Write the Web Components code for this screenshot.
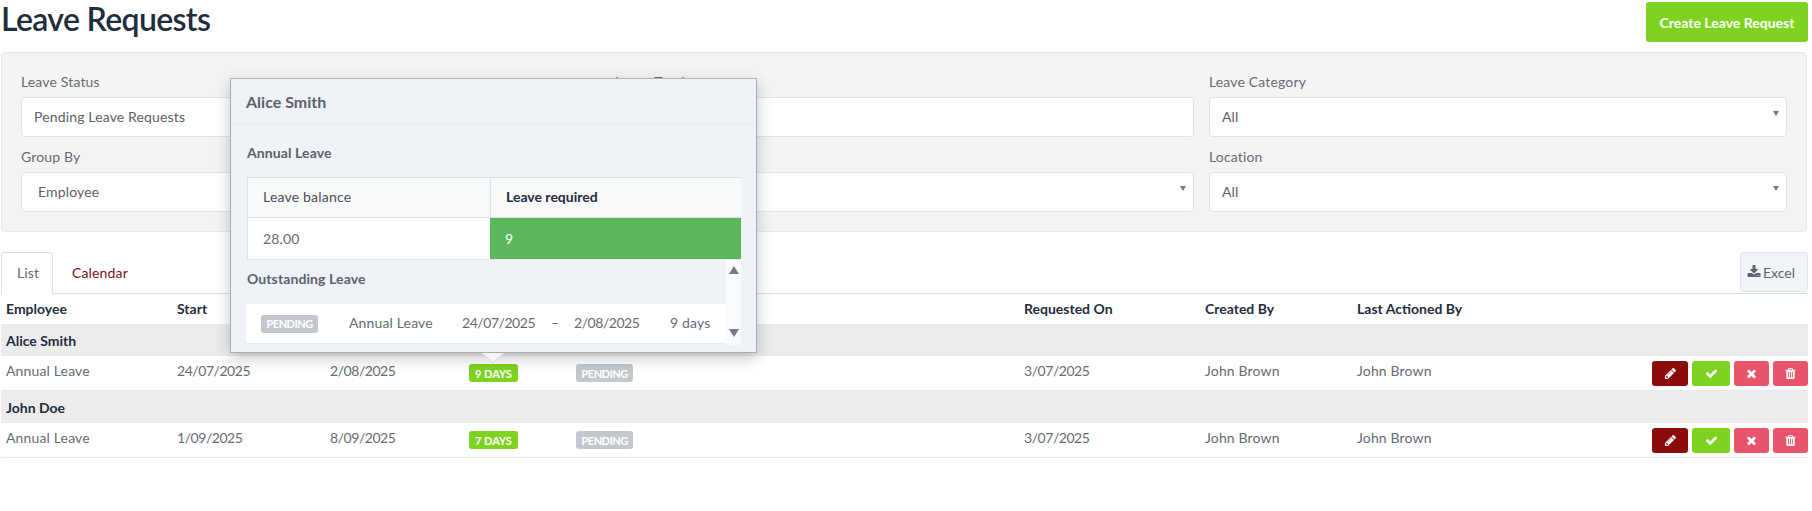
<!DOCTYPE html>
<html>
<head>
<meta charset="utf-8">
<title>Leave Requests</title>
<style>
    html, body { margin: 0; padding: 0; background: #fff; }
    body { font-family: Lato, "Open Sans", sans-serif; font-size: 14px; color: #676b75; letter-spacing: .15px; }
</style>
</head>
<body>
<leave-page>
    <page-header title="Leave Requests" action="Create Leave Request"></page-header>
    <filter-panel>
        <filter-field label="Leave Status" value="Pending Leave Requests"></filter-field>
        <filter-field label="Leave Total" wide></filter-field>
        <filter-field label="Leave Category" value="All" arrow></filter-field>
        <filter-field label="Group By" value="Employee" indent></filter-field>
        <filter-field arrow wide></filter-field>
        <filter-field label="Location" value="All" arrow></filter-field>
    </filter-panel>
    <tab-bar></tab-bar>
    <leave-head></leave-head>
    <leave-group>Alice Smith</leave-group>
    <leave-row type="Annual Leave" start="24/07/2025" end="2/08/2025" days="9 days" requested="3/07/2025" created="John Brown" actioned="John Brown"></leave-row>
    <leave-group>John Doe</leave-group>
    <leave-row type="Annual Leave" start="1/09/2025" end="8/09/2025" days="7 days" requested="3/07/2025" created="John Brown" actioned="John Brown"></leave-row>
    <leave-popover></leave-popover>
</leave-page>

<script>
    // font awesome 4 glyphs, 1792 grid
    const ICONS = {
        pencil: 'M491 1536l91-91-235-235-91 91v107h128v128h107zm523-928q0-22-22-22-10 0-17 7l-542 542q-7 7-7 17 0 22 22 22 10 0 17-7l542-542q7-7 7-17zm-54-192l416 416-832 832h-416v-416zm683 96q0 53-37 90l-166 166-416-416 166-165q36-38 90-38 53 0 91 38l235 234q37 39 37 91z',
        check: 'M1671 566q0 40-28 68l-724 724-136 136q-28 28-68 28t-68-28l-136-136-362-362q-28-28-28-68t28-68l136-136q28-28 68-28t68 28l294 295 656-657q28-28 68-28t68 28l136 136q28 28 28 68z',
        times: 'M1490 1322q0 40-28 68l-136 136q-28 28-68 28t-68-28l-294-294-294 294q-28 28-68 28t-68-28l-136-136q-28-28-28-68t28-68l294-294-294-294q-28-28-28-68t28-68l136-136q28-28 68-28t68 28l294 294 294-294q28-28 68-28t68 28l136 136q28 28 28 68t-28 68l-294 294 294 294q28 28 28 68z',
        trash: 'M704 1376v-704q0-14-9-23t-23-9h-64q-14 0-23 9t-9 23v704q0 14 9 23t23 9h64q14 0 23-9t9-23zm256 0v-704q0-14-9-23t-23-9h-64q-14 0-23 9t-9 23v704q0 14 9 23t23 9h64q14 0 23-9t9-23zm256 0v-704q0-14-9-23t-23-9h-64q-14 0-23 9t-9 23v704q0 14 9 23t23 9h64q14 0 23-9t9-23zm-544-992h448l-48-117q-7-9-17-11h-317q-10 2-17 11zm928 32v64q0 14-9 23t-23 9h-96v948q0 83-47 143.500t-113 60.500h-832q-66 0-113-58.500t-47-141.500v-952h-96q-14 0-23-9t-9-23v-64q0-14 9-23t23-9h309l70-167q15-37 54-63t79-26h320q40 0 79 26t54 63l70 167h309q14 0 23 9t9 23z',
        download: 'M1344 1344q0-26-19-45t-45-19-45 19-19 45 19 45 45 19 45-19 19-45zm256 0q0-26-19-45t-45-19-45 19-19 45 19 45 45 19 45-19 19-45zm128-224v320q0 40-28 68t-68 28h-1472q-40 0-68-28t-28-68v-320q0-40 28-68t68-28h465l135 136q58 56 136 56t136-56l136-136h464q40 0 68 28t28 68zm-325-569q17 41-14 70l-448 448q-18 19-45 19t-45-19l-448-448q-31-29-14-70 17-39 59-39h256v-448q0-26 19-45t45-19h256q26 0 45 19t19 45v448h256q42 0 59 39z'
    };
    const icon = (name, size) => `<svg width="${size}" height="${size}" viewBox="0 0 1792 1792" fill="currentColor"><path d="${ICONS[name]}"/></svg>`;

    const COLUMNS = '171px 153px 139px 107px 448px 181px 152px 1fr';

    class LeavePage extends HTMLElement {
        constructor() {
            super();
            this.attachShadow({ mode: 'open' }).innerHTML = `
                <style>
                    :host { display: block; position: relative; width: 1807px; margin-left: 1px; }
                </style>
                <slot></slot>
            `;
        }
    }

    class PageHeader extends HTMLElement {
        connectedCallback() {
            this.attachShadow({ mode: 'open' }).innerHTML = `
                <style>
                    :host { display: flex; justify-content: space-between; height: 52px; }
                    h1 { margin: 0; font-size: 32px; line-height: 38px; font-weight: 600; color: #1f2d3d; letter-spacing: -0.65px; }
                    button {
                        width: 162px; height: 40px; margin-top: 2px; padding: 0; border: 0; border-radius: 3px;
                        background: #7ed321; color: #fff; font: 700 14px Lato, sans-serif; cursor: pointer;
                    }
                </style>
                <h1>${this.getAttribute('title')}</h1>
                <button>${this.getAttribute('action')}</button>
            `;
        }
    }

    class FilterPanel extends HTMLElement {
        constructor() {
            super();
            this.attachShadow({ mode: 'open' }).innerHTML = `
                <style>
                    :host {
                        display: grid; grid-template-columns: repeat(3, 578px); column-gap: 16px; row-gap: 10px;
                        padding: 19px; box-sizing: border-box; width: 1806px;
                        background: #f4f4f4; border: 1px solid #e8e8e8; border-radius: 4px;
                    }
                </style>
                <slot></slot>
            `;
        }
    }

    class FilterField extends HTMLElement {
        connectedCallback() {
            const label = this.getAttribute('label') || '&nbsp;';
            const value = this.getAttribute('value') || '';
            const pad = this.hasAttribute('indent') ? 16 : 12;
            this.attachShadow({ mode: 'open' }).innerHTML = `
                <style>
                    :host { display: block; }
                    :host([wide]) { margin-right: -1px; }
                    label { display: block; height: 25px; line-height: 19px; font-size: 14px; color: #676b75; }
                    .box {
                        position: relative; display: flex; align-items: center; height: 40px; box-sizing: border-box;
                        padding-left: ${pad}px; padding-bottom: 2px; background: #fff; border: 1px solid #dfe3e8; border-radius: 4px;
                        font-size: 14px; color: #5e6068;
                    }
                    .arrow {
                        position: absolute; right: 7px; top: 13px; width: 0; height: 0;
                        border-left: 3px solid transparent; border-right: 3px solid transparent; border-top: 5px solid #7d7589;
                    }
                </style>
                <label>${label}</label>
                <div class="box">${value}${this.hasAttribute('arrow') ? '<span class="arrow"></span>' : ''}</div>
            `;
        }
    }

    class TabBar extends HTMLElement {
        constructor() {
            super();
            this.attachShadow({ mode: 'open' }).innerHTML = `
                <style>
                    :host {
                        display: flex; align-items: flex-start; height: 42px; box-sizing: border-box; margin-top: 20px;
                        border-bottom: 1px solid #dcdfe3;
                    }
                    .tab {
                        height: 42px; box-sizing: border-box; padding: 0 15px; line-height: 39px; font-size: 14px;
                        border: 1px solid transparent; border-bottom: 0; border-radius: 4px 4px 0 0;
                    }
                    .active { width: 52px; border-color: #dcdfe3; background: #fff; color: #666; }
                    .link { margin-left: 3px; color: #7b1113; }
                    button {
                        display: flex; align-items: center; gap: 2px; margin-left: auto; width: 68px; height: 40px; padding: 0 0 0 6px;
                        background: #f1f4f8; border: 1px solid #e1e5ea; border-radius: 4px; color: #5f6570;
                        font: 14px Lato, sans-serif;
                    }
                </style>
                <div class="tab active">List</div>
                <div class="tab link">Calendar</div>
                <button>${icon('download', 14)}Excel</button>
            `;
        }
    }

    class LeaveHead extends HTMLElement {
        constructor() {
            super();
            const titles = ['Employee', 'Start', 'End', 'Duration', 'Status', 'Requested On', 'Created By', 'Last Actioned By'];
            this.attachShadow({ mode: 'open' }).innerHTML = `
                <style>
                    :host { display: grid; grid-template-columns: ${COLUMNS}; height: 30px; align-items: center; padding-left: 5px; }
                    div { margin-bottom: 2px; font-weight: 700; color: #1f2d3d; font-size: 14px; letter-spacing: 0; }
                </style>
                ${titles.map(t => `<div>${t}</div>`).join('')}
            `;
        }
    }

    class LeaveGroup extends HTMLElement {
        constructor() {
            super();
            this.attachShadow({ mode: 'open' }).innerHTML = `
                <style>
                    :host {
                        display: flex; align-items: center; height: 32px; padding-left: 5px; background: #ececec;
                        font-weight: 700; font-size: 14px; color: #1f2d3d; letter-spacing: 0;
                    }
                </style>
                <slot></slot>
            `;
        }
    }

    class StatusBadge extends HTMLElement {
        constructor() {
            super();
            this.attachShadow({ mode: 'open' }).innerHTML = `
                <style>
                    :host {
                        display: inline-flex; align-items: center; justify-content: center; height: 18px; padding: 0 5.5px;
                        border-radius: 3px; background: #c3c8cf; color: #fff; letter-spacing: -0.5px;
                        font: 700 11px Lato, sans-serif; text-transform: uppercase;
                    }
                    :host([tone="green"]) { background: #7ed321; padding: 0 6px; letter-spacing: 0; }
                </style>
                <slot></slot>
            `;
        }
    }

    class RowActions extends HTMLElement {
        constructor() {
            super();
            this.attachShadow({ mode: 'open' }).innerHTML = `
                <style>
                    :host { display: flex; justify-content: flex-end; gap: 4px; }
                    button {
                        display: flex; align-items: center; justify-content: center; height: 25px; padding: 0; border: 0;
                        border-radius: 3px; color: #fff;
                    }
                    .edit { width: 36px; background: #8b0a0a; }
                    .ok { width: 38px; background: #7ed321; }
                    .no, .del { width: 35px; background: #e8556a; }
                </style>
                <button class="edit">${icon('pencil', 13)}</button>
                <button class="ok">${icon('check', 13)}</button>
                <button class="no">${icon('times', 13)}</button>
                <button class="del">${icon('trash', 13)}</button>
            `;
        }
    }

    class LeaveRow extends HTMLElement {
        connectedCallback() {
            const a = n => this.getAttribute(n);
            this.attachShadow({ mode: 'open' }).innerHTML = `
                <style>
                    :host {
                        display: grid; grid-template-columns: ${COLUMNS}; align-items: center; height: 35px; box-sizing: border-box;
                        padding-left: 5px; border-bottom: 1px solid #e6eaf0; font-size: 14px; color: #676b75;
                    }
                    .t { margin-bottom: 6px; }
                    .d { margin-bottom: 6px; letter-spacing: -0.45px; }
                    .last { display: flex; justify-content: space-between; align-items: center; }
                    .slot-badge { display: flex; }
                </style>
                <div class="t">${a('type')}</div>
                <div class="d">${a('start')}</div>
                <div class="d">${a('end')}</div>
                <div class="slot-badge"><status-badge tone="green">${a('days')}</status-badge></div>
                <div class="slot-badge"><status-badge>Pending</status-badge></div>
                <div class="d">${a('requested')}</div>
                <div class="t">${a('created')}</div>
                <div class="last"><span class="t">${a('actioned')}</span><row-actions></row-actions></div>
            `;
        }
    }

    class LeavePopover extends HTMLElement {
        constructor() {
            super();
            this.attachShadow({ mode: 'open' }).innerHTML = `
                <style>
                    :host {
                        position: absolute; left: 229px; top: 78px; width: 527px; height: 275px; box-sizing: border-box;
                        background: #eff2f7; border: 1px solid #a9abad; border-top-color: #b5b5b5; box-shadow: 0 5px 15px rgba(0,0,0,.22);
                        color: #5d616c; font-size: 14px;
                    }
                    header {
                        height: 45px; box-sizing: border-box; padding-left: 15px; line-height: 45px; font-size: 16px; font-weight: 700;
                        color: #5d616c; border-bottom: 1px solid #e6e9ee; letter-spacing: 0;
                    }
                    h4 { margin: 0; font-size: 14px; font-weight: 700; color: #5d616c; letter-spacing: .1px; }
                    .annual { height: 53px; line-height: 57px; padding-left: 16px; }
                    .balance {
                        display: grid; grid-template-columns: 242px 251px; grid-template-rows: 40px 41px;
                        width: 494px; margin-left: 16px; box-sizing: border-box;
                        border: 1px solid #dde1e6; border-bottom-color: #e6e9ee;
                    }
                    .balance div { display: flex; align-items: center; padding-left: 15px; }
                    .top { background: #f8f9fb; border-bottom: 1px solid #dde1e6; color: #4b4f59; padding-bottom: 2px; letter-spacing: .2px; }
                    .top.right { border-left: 1px solid #dde1e6; color: #1f2d3d; font-weight: 700; letter-spacing: 0; }
                    .val { background: #fff; color: #676b75; }
                    .val.right { background: #5cb85c; color: #fff; }
                    .scroller { display: flex; width: 495px; height: 85px; margin-left: 15px; }
                    .list { flex: 1; }
                    .list h4 { height: 44px; line-height: 38px; padding-left: 1px; }
                    .item {
                        display: grid; grid-template-columns: 88px 113px 89px 23px 96px auto; align-items: center;
                        height: 40px; box-sizing: border-box; padding-left: 15px; background: #fff; border-bottom: 1px solid #e8ebf0;
                        color: #676b75;
                    }
                    .item span { margin-bottom: 2px; }
                    .item .d { letter-spacing: -0.45px; }
                    status-badge { justify-self: start; }
                    .bar { display: flex; flex-direction: column; justify-content: space-between; align-items: center; width: 15px; height: 85px; padding: 6px 0 8px; box-sizing: border-box; background: #fbfbfb; }
                    .up, .down { width: 0; height: 0; border-left: 5px solid transparent; border-right: 5px solid transparent; }
                    .up { border-bottom: 8px solid #7d7589; }
                    .down { border-top: 8px solid #7d7589; }
                    svg.caret { position: absolute; left: 251px; top: 274px; }
                </style>
                <header>Alice Smith</header>
                <h4 class="annual">Annual Leave</h4>
                <section class="balance">
                    <div class="top">Leave balance</div>
                    <div class="top right">Leave required</div>
                    <div class="val">28.00</div>
                    <div class="val right">9</div>
                </section>
                <div class="scroller">
                    <div class="list">
                        <h4>Outstanding Leave</h4>
                        <div class="item">
                            <status-badge>Pending</status-badge>
                            <span>Annual Leave</span>
                            <span class="d">24/07/2025</span>
                            <span>–</span>
                            <span class="d">2/08/2025</span>
                            <span>9 days</span>
                        </div>
                    </div>
                    <div class="bar"><span class="up"></span><span class="down"></span></div>
                </div>
                <svg class="caret" width="22" height="11" viewBox="0 0 22 11"><path d="M0 0 L11 10 L22 0 Z" fill="#f2f4f8" stroke="#d5d7da" stroke-width="1"/><path d="M0 0 H22" stroke="#eff2f7" stroke-width="1.500"/></svg>
            `;
        }
    }

    customElements.define('leave-page', LeavePage);
    customElements.define('page-header', PageHeader);
    customElements.define('filter-panel', FilterPanel);
    customElements.define('filter-field', FilterField);
    customElements.define('tab-bar', TabBar);
    customElements.define('leave-head', LeaveHead);
    customElements.define('leave-group', LeaveGroup);
    customElements.define('status-badge', StatusBadge);
    customElements.define('row-actions', RowActions);
    customElements.define('leave-row', LeaveRow);
    customElements.define('leave-popover', LeavePopover);
</script>
</body>
</html>
